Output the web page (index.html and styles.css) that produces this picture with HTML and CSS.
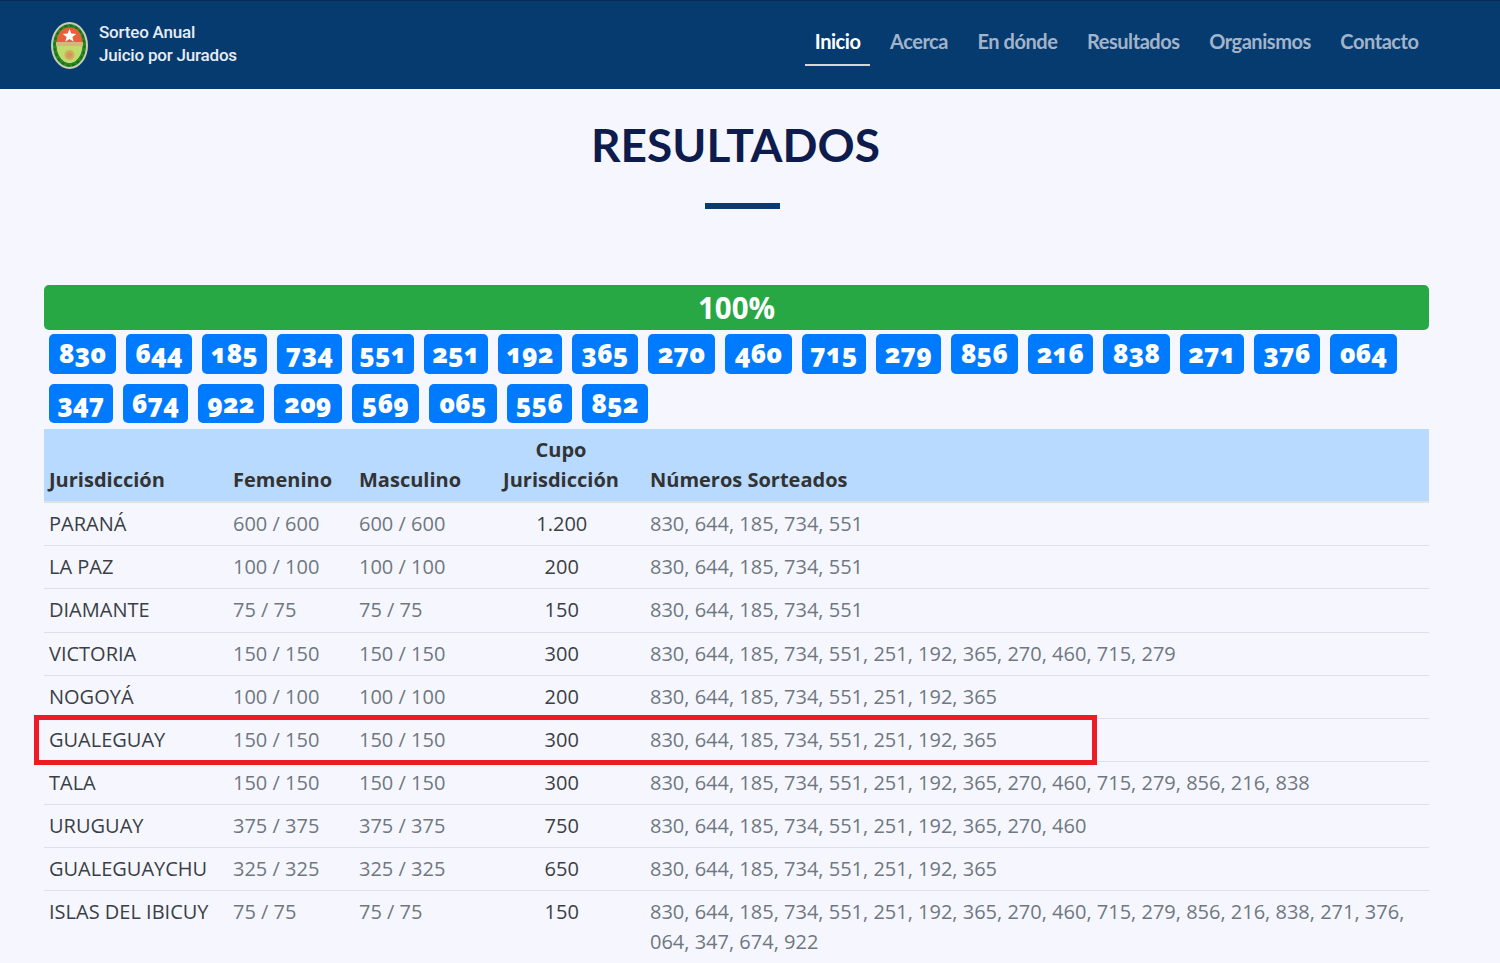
FILE: index.html
```html
<!DOCTYPE html>
<html lang="es">
<head>
<meta charset="utf-8">
<title>Resultados</title>
<link rel="stylesheet" href="styles.css">
</head>
<body>
<header class="navbar">
  <a class="brand">
    <svg class="logo" viewBox="0 0 37 47" width="37" height="47" aria-hidden="true">
      <ellipse cx="18.500" cy="23.500" rx="18.500" ry="23.500" fill="#c9cbb8"/>
      <ellipse cx="18.500" cy="23.500" rx="16.500" ry="21.500" fill="#e9e6c4"/>
      <ellipse cx="18.500" cy="23.500" rx="14.500" ry="19.500" fill="none" stroke="#2c8a24" stroke-width="4"/>
      <ellipse cx="18.500" cy="23.500" rx="15" ry="20" fill="none" stroke="#1c6f1c" stroke-width="2" stroke-dasharray="3 2.500"/>
      <path d="M5.500 22C5.500 11 11 5.500 18.500 5.500S31.500 11 31.500 22z" fill="#e9603c"/>
      <path d="M5.500 22h26c0 11-6 18.500-13 18.500S5.500 33 5.500 22z" fill="#bfdc6c"/>
      <rect x="5" y="20" width="27" height="4" fill="#d9b57e"/>
      <path d="M18.500 7l1.800 4.600 4.900.3-3.800 3.100 1.300 4.800-4.200-2.700-4.200 2.700 1.300-4.800-3.800-3.100 4.900-.3z" fill="#fff"/>
      <circle cx="18.500" cy="33" r="5" fill="#d6a862"/>
      <circle cx="18.500" cy="33" r="2.500" fill="#c99a58"/>
    </svg>
    <span class="brand-text">Sorteo Anual<br>Juicio por Jurados</span>
  </a>
  <nav class="nav">
    <a class="nav-link active">Inicio</a>
    <a class="nav-link">Acerca</a>
    <a class="nav-link">En dónde</a>
    <a class="nav-link">Resultados</a>
    <a class="nav-link">Organismos</a>
    <a class="nav-link">Contacto</a>
  </nav>
</header>
<main class="content">
  <div class="title-block">
    <h1>RESULTADOS</h1>
    <div class="rule"></div>
  </div>
  <div class="progress">100%</div>
  <div class="badges">
    <span class="badge" style="width:67px">830</span><span class="badge" style="width:66px">644</span><span class="badge" style="width:65px">185</span><span class="badge" style="width:65px">734</span><span class="badge" style="width:62px">551</span><span class="badge" style="width:64px">251</span><span class="badge" style="width:64px">192</span><span class="badge" style="width:66px">365</span><span class="badge" style="width:67px">270</span><span class="badge" style="width:67px">460</span><span class="badge" style="width:64px">715</span><span class="badge" style="width:65px">279</span><span class="badge" style="width:67px">856</span><span class="badge" style="width:65px">216</span><span class="badge" style="width:67px">838</span><span class="badge" style="width:64px">271</span><span class="badge" style="width:66px">376</span><span class="badge" style="width:67px">064</span><span class="badge" style="width:64px">347</span><span class="badge" style="width:65px">674</span><span class="badge" style="width:66px">922</span><span class="badge" style="width:68px">209</span><span class="badge" style="width:67px">569</span><span class="badge" style="width:68px">065</span><span class="badge" style="width:65px">556</span><span class="badge" style="width:66px">852</span>
  </div>
  <div class="table-wrap">
    <table>
      <colgroup><col class="c1"><col class="c2"><col class="c3"><col class="c4"><col></colgroup>
      <thead>
        <tr><th>Jurisdicción</th><th>Femenino</th><th>Masculino</th><th class="center">Cupo<br>Jurisdicción</th><th>Números Sorteados</th></tr>
      </thead>
      <tbody>
        <tr><td class="dark">PARANÁ</td><td>600 / 600</td><td>600 / 600</td><td class="center dark">1.200</td><td>830, 644, 185, 734, 551</td></tr>
        <tr><td class="dark">LA PAZ</td><td>100 / 100</td><td>100 / 100</td><td class="center dark">200</td><td>830, 644, 185, 734, 551</td></tr>
        <tr><td class="dark">DIAMANTE</td><td>75 / 75</td><td>75 / 75</td><td class="center dark">150</td><td>830, 644, 185, 734, 551</td></tr>
        <tr><td class="dark">VICTORIA</td><td>150 / 150</td><td>150 / 150</td><td class="center dark">300</td><td>830, 644, 185, 734, 551, 251, 192, 365, 270, 460, 715, 279</td></tr>
        <tr><td class="dark">NOGOYÁ</td><td>100 / 100</td><td>100 / 100</td><td class="center dark">200</td><td>830, 644, 185, 734, 551, 251, 192, 365</td></tr>
        <tr><td class="dark">GUALEGUAY</td><td>150 / 150</td><td>150 / 150</td><td class="center dark">300</td><td>830, 644, 185, 734, 551, 251, 192, 365</td></tr>
        <tr><td class="dark">TALA</td><td>150 / 150</td><td>150 / 150</td><td class="center dark">300</td><td>830, 644, 185, 734, 551, 251, 192, 365, 270, 460, 715, 279, 856, 216, 838</td></tr>
        <tr><td class="dark">URUGUAY</td><td>375 / 375</td><td>375 / 375</td><td class="center dark">750</td><td>830, 644, 185, 734, 551, 251, 192, 365, 270, 460</td></tr>
        <tr><td class="dark">GUALEGUAYCHU</td><td>325 / 325</td><td>325 / 325</td><td class="center dark">650</td><td>830, 644, 185, 734, 551, 251, 192, 365</td></tr>
        <tr><td class="dark">ISLAS DEL IBICUY</td><td>75 / 75</td><td>75 / 75</td><td class="center dark">150</td><td>830, 644, 185, 734, 551, 251, 192, 365, 270, 460, 715, 279, 856, 216, 838, 271, 376, 064, 347, 674, 922</td></tr>
      </tbody>
    </table>
    <div class="highlight"></div>
  </div>
</main>
</body>
</html>
```
FILE: styles.css
```css
* { box-sizing: border-box; }
html, body { margin: 0; height: 963px; overflow: hidden; }
body { background: #f6f7fe; font-family: "Open Sans", sans-serif; font-size: 20px; color: #444; }

.navbar { height: 89px; background: #063b70; border-top: 1px solid #0a2c55; display: flex; justify-content: space-between; align-items: center; padding: 0 71.500px 0 51px; }
.brand { display: flex; align-items: center; gap: 11px; }
.brand-text { font-family: Roboto, sans-serif; font-weight: 500; font-size: 17px; line-height: 23px; letter-spacing: -0.2px; color: #e6ecf3; margin-top: -2px; }
.logo { display: block; margin-top: 1px; }
.nav { display: flex; gap: 9.500px; margin-top: -3px; }
.nav-link { font-family: Lato, sans-serif; font-weight: 700; font-size: 20px; color: #a3b3c8; padding: 0 10px; height: 45.500px; line-height: 40px; letter-spacing: -0.45px; border-bottom: 2px solid transparent; }
.nav-link.active { color: #fff; border-bottom-color: #d6d6d2; }

.content { padding: 0 71px 0 44px; }
.title-block { height: 196px; padding-top: 31px; text-align: center; }
h1 { margin: 0 2px 0 0; font-family: Lato, sans-serif; font-weight: 700; font-size: 46px; line-height: 50px; color: #0e1b4d; }
.rule { width: 75px; height: 6px; background: #0a3a73; margin: 33px 0 0 661px; }

.progress { height: 44.500px; border-radius: 5px; background: #28a745; color: #fff; text-align: center; font-family: "Open Sans", sans-serif; font-weight: 700; font-size: 29.500px; line-height: 45px; }

.badges { display: flex; flex-wrap: wrap; column-gap: 10px; row-gap: 10px; padding: 4.500px 0 6px 5px; }
.badge { height: 39.500px; border-radius: 5px; background: #007bff; color: #fff; text-align: center; font-family: "Open Sans", sans-serif; font-weight: 800; font-size: 26px; line-height: 38px; font-feature-settings: "onum"; }

.table-wrap { position: relative; }
table { width: 100%; border-collapse: collapse; table-layout: fixed; }
.c1 { width: 184px; } .c2 { width: 126px; } .c3 { width: 123px; } .c4 { width: 168px; }
th { background: #b8daff; color: #333; font-weight: 700; font-size: 20px; line-height: 30px; text-align: left; vertical-align: bottom; padding: 5.500px 5px 6.700px; border-bottom: 2px solid #dee2e6; }
td { color: #6f7780; font-size: 20px; line-height: 30px; padding: 6px 5px 6.150px; border-bottom: 1px solid #dee2e6; vertical-align: top; }
td.dark { color: #3a3f45; }
th.center, td.center { text-align: center; }
td.center { padding-left: 6.500px; }
.highlight { position: absolute; left: -10px; top: 285.500px; width: 1063px; height: 50px; border: 5px solid #ed1c24; pointer-events: none; }
```
